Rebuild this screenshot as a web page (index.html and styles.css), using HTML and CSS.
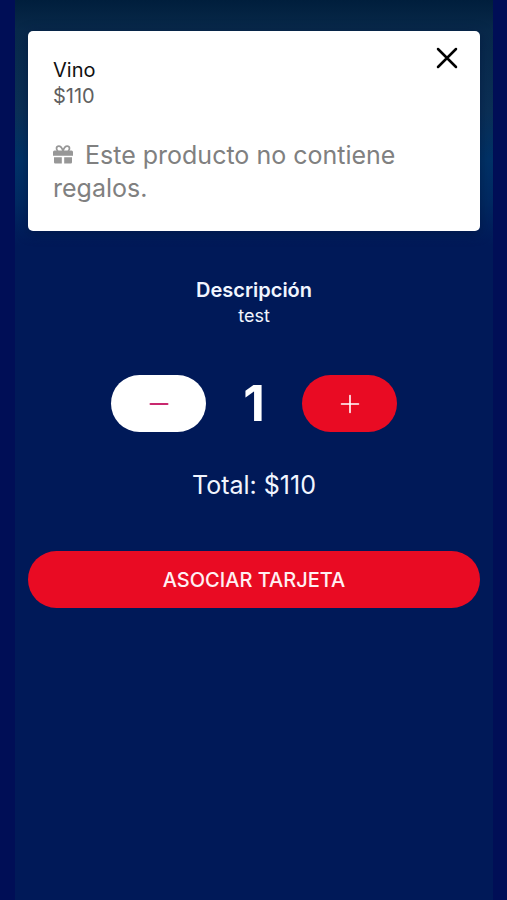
FILE: index.html
```html
<!DOCTYPE html>
<html lang="es">
<head>
<meta charset="utf-8">
<meta name="viewport" content="width=device-width, initial-scale=1">
<title>Vino</title>
<link rel="stylesheet" href="styles.css">
</head>
<body>
<main class="panel">
  <section class="card">
    <button class="close" type="button" aria-label="Cerrar">
      <svg viewBox="0 0 22 22" width="22" height="22" fill="none" stroke="currentColor" stroke-width="2.5" stroke-linecap="round"><path d="M2 2l18 18M20 2L2 20"/></svg>
    </button>
    <h1 class="name">Vino</h1>
    <p class="price">$110</p>
    <p class="gifts"><svg class="gift" viewBox="0 0 20 19" width="20" height="19"><path fill="currentColor" d="M1.500 5.500h17q1.500 0 1.500 1.500v3.700H0V7q0-1.500 1.500-1.500zM1 12.200h7.800v6.300H2.200Q1 18.500 1 17.300zM11.200 12.200H19v5.100q0 1.200-1.200 1.200h-6.600z"/><path fill="none" stroke="currentColor" stroke-width="1.800" d="M10 6C9 3 7.500 1.200 5.800 1.200C3 1.200 2.800 5 5 6M10 6c1-3 2.500-4.800 4.200-4.800C17 1.200 17.200 5 15 6"/></svg>Este producto no contiene regalos.</p>
  </section>
  <section class="description">
    <h2 class="heading">Descripción</h2>
    <p class="detail">test</p>
  </section>
  <div class="stepper">
    <button class="step minus" type="button" aria-label="Quitar uno">
      <svg viewBox="0 0 20 20" width="20" height="20" fill="none" stroke="currentColor" stroke-width="2" stroke-linecap="round"><path d="M1.500 10h17"/></svg>
    </button>
    <output class="count">1</output>
    <button class="step plus" type="button" aria-label="Agregar uno">
      <svg viewBox="0 0 20 20" width="20" height="20" fill="none" stroke="currentColor" stroke-width="1.600" stroke-linecap="round"><path d="M1.500 10h17M10 1.500v17"/></svg>
    </button>
  </div>
  <p class="total">Total: $110</p>
  <button class="submit" type="button">ASOCIAR TARJETA</button>
</main>
</body>
</html>
```
FILE: styles.css
```css
* {
  box-sizing: border-box;
}

body {
  margin: 0;
  background: #000e56;
  color: #f1f5ff;
  font-family: Inter, "Liberation Sans", sans-serif;
  font-variation-settings: "opsz" 24;
}

h1, h2, p {
  margin: 0;
  font-weight: 400;
}

button {
  border: 0;
  padding: 0;
  font: inherit;
  cursor: pointer;
}

svg {
  display: block;
}

.panel {
  min-height: 100vh;
  margin: 0 14px 0 15px;
  padding: 31px 13px;
  background: #001958 linear-gradient(#001e3c 0, #08294a 30px, #0b3056 110px, #003267 160px, #002a62 200px, #001958 245px) no-repeat;
  text-align: center;
}

.card {
  position: relative;
  padding: 26px 25px;
  border-radius: 5px;
  background: #fff;
  box-shadow: 0 2px 12px rgba(0, 20, 60, 0.6);
  color: #808080;
  text-align: left;
}

.close {
  position: absolute;
  top: 16px;
  right: 22px;
  background: none;
  color: #000;
}

.name,
.price {
  font-size: 20px;
  line-height: 26px;
}

.name {
  color: #111;
}

.price {
  color: #606060;
}

.gifts {
  margin-top: 30px;
  font-size: 25px;
  line-height: 33px;
}

.gift {
  display: inline-block;
  margin-right: 12px;
  color: #979797;
}

.description {
  margin-top: 46px;
}

.heading {
  font-size: 20px;
  font-weight: 600;
  line-height: 26px;
}

.detail {
  font-size: 18px;
  line-height: 25px;
}

.stepper {
  display: flex;
  justify-content: center;
  align-items: center;
  margin-top: 47px;
}

.step {
  display: grid;
  place-items: center;
  width: 95px;
  height: 57px;
  border-radius: 29px;
}

.minus {
  background: #fff;
  color: #c8286e;
}

.plus {
  background: #e90b23;
  color: #fff;
}

.count {
  width: 96px;
  color: #fff;
  font-size: 50px;
  font-weight: 700;
  line-height: 57px;
}

.total {
  margin-top: 37px;
  font-size: 25px;
  line-height: 33px;
}

.submit {
  display: block;
  width: 100%;
  height: 57px;
  margin-top: 49px;
  border-radius: 29px;
  background: #e90b23;
  color: #fff0f2;
  font-size: 20px;
  font-weight: 500;
}
```
